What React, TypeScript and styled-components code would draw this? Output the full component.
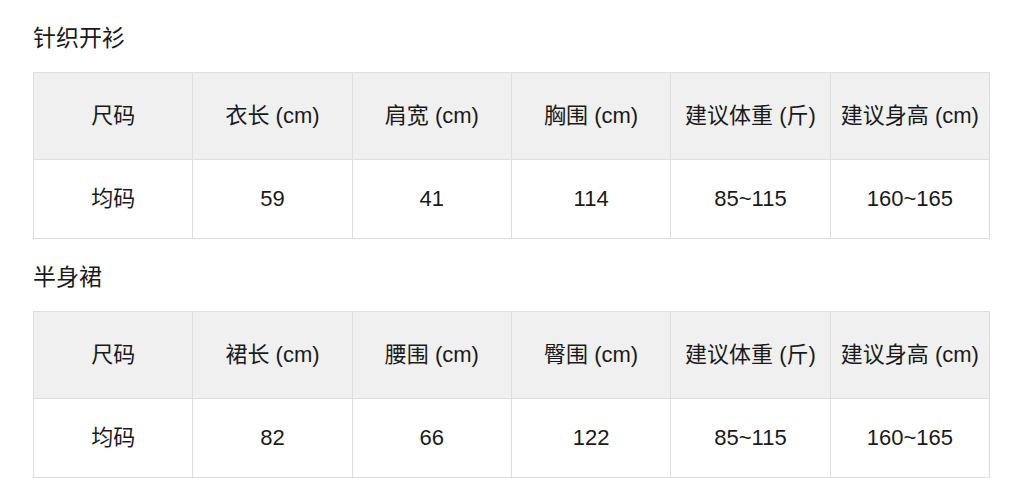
import React from "react";
import styled, { createGlobalStyle } from "styled-components";

const Global = createGlobalStyle`
  html, body { margin: 0; padding: 0; background: #ffffff; }
  body {
    font-family: "Liberation Sans", "Noto Sans CJK SC", sans-serif;
    color: #1f1f1f;
  }
`;

const Page = styled.div`
  display: flex;
  flex-direction: column;
  gap: 24px;
  padding: 24px 0 0 33px;
`;

const Section = styled.section`
  display: flex;
  flex-direction: column;
  gap: 20px;
`;

const Title = styled.h2`
  margin: 0;
  font-size: 23px;
  line-height: 28px;
  font-weight: 400;
  color: #1a1a1a;
`;

const Table = styled.table`
  width: 957px;
  border-collapse: collapse;
  table-layout: fixed;
`;

const Th = styled.th`
  height: 86px;
  padding: 0;
  background: #f0f0f0;
  border: 1px solid #dedede;
  font-size: 22px;
  line-height: 28px;
  font-weight: 400;
  color: #1a1a1a;
  text-align: center;
  vertical-align: middle;
  white-space: nowrap;
`;

const Td = styled.td`
  height: 78px;
  padding: 0;
  background: #ffffff;
  border: 1px solid #dedede;
  font-size: 22px;
  line-height: 28px;
  color: #1a1a1a;
  text-align: center;
  vertical-align: middle;
`;

type Spec = { title: string; headers: string[]; values: string[] };

const data: Spec[] = [
  {
    title: "针织开衫",
    headers: ["尺码", "衣长 (cm)", "肩宽 (cm)", "胸围 (cm)", "建议体重 (斤)", "建议身高 (cm)"],
    values: ["均码", "59", "41", "114", "85~115", "160~165"],
  },
  {
    title: "半身裙",
    headers: ["尺码", "裙长 (cm)", "腰围 (cm)", "臀围 (cm)", "建议体重 (斤)", "建议身高 (cm)"],
    values: ["均码", "82", "66", "122", "85~115", "160~165"],
  },
];

export default function App() {
  return (
    <>
      <Global />
      <Page>
        {data.map((s) => (
          <Section key={s.title}>
            <Title>{s.title}</Title>
            <Table>
              <thead>
                <tr>
                  {s.headers.map((h) => (
                    <Th key={h}>{h}</Th>
                  ))}
                </tr>
              </thead>
              <tbody>
                <tr>
                  {s.values.map((v, i) => (
                    <Td key={i}>{v}</Td>
                  ))}
                </tr>
              </tbody>
            </Table>
          </Section>
        ))}
      </Page>
    </>
  );
}
